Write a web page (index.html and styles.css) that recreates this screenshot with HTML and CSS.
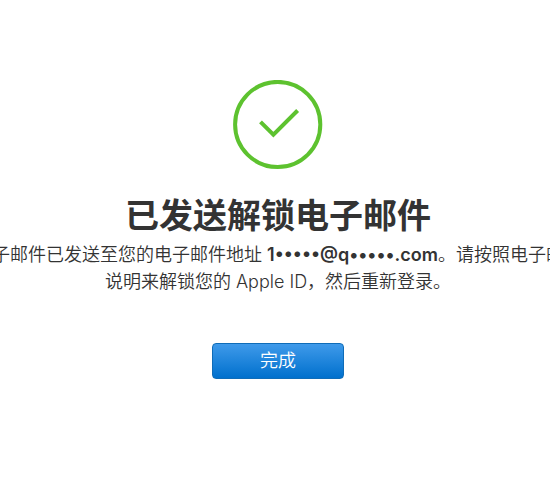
FILE: index.html
```
<!DOCTYPE html>
<html lang="zh-CN">
<head>
  <meta charset="UTF-8">
  <meta name="viewport" content="width=device-width, initial-scale=1.0">
  <title>Apple ID</title>
  <link rel="stylesheet" href="styles.css">
</head>
<body>
  <main class="confirmation">
    <svg class="check-icon" viewBox="0 0 90 90" fill="none" aria-hidden="true">
      <circle cx="44.7" cy="44.5" r="42.6" stroke="#5dc22f" stroke-width="4"/>
      <path d="M27.5 41.8L40.4 54.7L64.6 30.5" stroke="#5dc22f" stroke-width="4"/>
    </svg>
    <h1 class="title">已发送解锁电子邮件</h1>
    <p class="message">一封电子邮件已发送至您的电子邮件地址 <strong>1•••••@q•••••.com</strong>。请按照电子邮件中的<br>说明来解锁您的 Apple ID，然后重新登录。</p>
    <button class="done-button" type="button">完成</button>
  </main>
</body>
</html>
```
FILE: styles.css
```
* {
  box-sizing: border-box;
}

body {
  margin: 0;
  padding: 80px 0 40px 6px;
  background: #ffffff;
  color: #333333;
  font-family: Inter, "Noto Sans CJK SC", sans-serif;
  overflow: hidden;
}

.confirmation {
  display: flex;
  flex-direction: column;
  align-items: center;
  text-align: center;
}

.check-icon {
  width: 90px;
  height: 90px;
}

.title {
  margin: 23px 0 0;
  font-size: 34px;
  line-height: 46px;
  font-weight: 700;
  white-space: nowrap;
}

.message {
  margin: 2px 0 0;
  font-size: 18px;
  line-height: 27px;
  font-weight: 350;
  white-space: nowrap;
}

.message strong {
  font-weight: 600;
}

.done-button {
  width: 132px;
  height: 36px;
  margin-top: 48px;
  padding: 0;
  border: 1px solid #0f6cb8;
  border-radius: 4px;
  background: linear-gradient(to bottom, #3f9aea, #0070cd);
  color: #ffffff;
  font-family: inherit;
  font-size: 18px;
  font-weight: 350;
  line-height: 34px;
  cursor: pointer;
}
```
